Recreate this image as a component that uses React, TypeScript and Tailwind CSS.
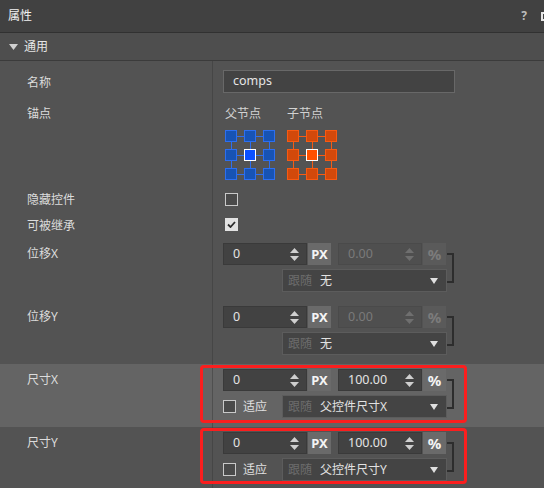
import React from "react";

const Spinner = ({ disabled }: { disabled?: boolean }) => (
  <svg width="9" height="13" viewBox="0 0 9 13">
    <path d="M0 5 L4.5 0 L9 5 Z" fill={disabled ? "#6f6f6f" : "#cfcfcf"} />
    <path d="M0 8 L9 8 L4.5 13 Z" fill={disabled ? "#6f6f6f" : "#cfcfcf"} />
  </svg>
);

const NumberField = ({ value, disabled }: { value: string; disabled?: boolean }) => (
  <div
    className={
      disabled
        ? "w-[84px] h-[22px] flex items-center justify-between pl-[9px] pr-[7px] border border-[#4a4a4a] bg-[#4f4f4f] text-[#7a7a7a]"
        : "w-[84px] h-[22px] flex items-center justify-between pl-[9px] pr-[7px] border border-[#3a3a3a] bg-[#424242] text-[#e4e4e4]"
    }
  >
    <span className="leading-none text-[12.5px]">{value}</span>
    <Spinner disabled={disabled} />
  </div>
);

const UnitBox = ({ label, disabled, big }: { label: string; disabled?: boolean; big?: boolean }) => (
  <div
    className={
      disabled
        ? "w-[23px] h-[22px] flex items-center justify-center bg-[#5a5a5a] text-[#7c7c7c] font-bold"
        : "w-[23px] h-[22px] flex items-center justify-center bg-[#6a6a6a] text-[#f4f4f4] font-bold"
    }
  >
    <span className={big ? "text-[15px] leading-none" : "text-[13px] leading-none"}>{label}</span>
  </div>
);

const Checkbox = ({ checked }: { checked?: boolean }) =>
  checked ? (
    <div className="w-[13px] h-[13px] bg-[#e2e2e2] flex items-center justify-center">
      <svg width="9" height="7" viewBox="0 0 9 7">
        <path d="M1 3.5 L3.5 6 L8 1" stroke="#2d2d2d" strokeWidth="1.8" fill="none" />
      </svg>
    </div>
  ) : (
    <div className="w-[13px] h-[13px] border border-[#c9c9c9] bg-[#4a4a4a]" />
  );

const Dropdown = ({ value, fit }: { value: string; fit?: boolean }) => (
  <div className="flex items-center h-[23px]">
    {fit ? (
      <div className="w-[59px] flex items-center">
        <Checkbox />
        <span className="ml-[7px] text-[#e0e0e0]">适应</span>
      </div>
    ) : (
      <div className="w-[59px]" />
    )}
    <div className="w-[165px] h-[23px] flex items-center pl-[5px] pr-[8px] bg-[#444444] border border-[#5c5c5c]">
      <span className="text-[#6c6c6c]">跟随</span>
      <span className="ml-[8px] text-[#e2e2e2]">{value}</span>
      <svg className="ml-auto" width="8" height="6" viewBox="0 0 8 6">
        <path d="M0 0 L8 0 L4 6 Z" fill="#e0e0e0" />
      </svg>
    </div>
  </div>
);

const TransformGroup = ({
  v1,
  v2,
  v2Disabled,
  dd,
  fit,
}: {
  v1: string;
  v2: string;
  v2Disabled?: boolean;
  dd: string;
  fit?: boolean;
}) => (
  <div className="flex pt-[5px]">
    <div className="flex flex-col gap-[4px]">
      <div className="flex">
        <NumberField value={v1} />
        <div className="ml-[1px]">
          <UnitBox label="PX" />
        </div>
        <div className="ml-[7px]">
          <NumberField value={v2} disabled={v2Disabled} />
        </div>
        <div className="ml-[1px]">
          <UnitBox label="%" disabled={v2Disabled} big />
        </div>
      </div>
      <Dropdown value={dd} fit={fit} />
    </div>
    <div className="w-[7px] h-[30px] mt-[10px] border-y-2 border-r-2 border-[#2d2d2d]" />
  </div>
);

const AnchorGrid = ({ fill, stroke, center }: { fill: string; stroke: string; center: string }) => {
  const pos = [0, 19, 38];
  return (
    <svg width="50" height="50" viewBox="0 0 50 50">
      {pos.map((p) => (
        <g key={"l" + p}>
          <line x1="12" y1={p + 6.5} x2="19" y2={p + 6.5} stroke={stroke} strokeWidth="1" />
          <line x1="31" y1={p + 6.5} x2="38" y2={p + 6.5} stroke={stroke} strokeWidth="1" />
          <line x1={p + 6.5} y1="12" x2={p + 6.5} y2="19" stroke={stroke} strokeWidth="1" />
          <line x1={p + 6.5} y1="31" x2={p + 6.5} y2="38" stroke={stroke} strokeWidth="1" />
        </g>
      ))}
      {pos.map((y, r) =>
        pos.map((x, c) => {
          const isCenter = r === 1 && c === 1;
          return (
            <rect
              key={`${r}-${c}`}
              x={x + 0.5}
              y={y + 0.5}
              width="11"
              height="11"
              fill={isCenter ? center : fill}
              stroke={isCenter ? "#ffffff" : stroke}
              strokeWidth="1"
            />
          );
        })
      )}
    </svg>
  );
};

const Label = ({ children, className }: { children: React.ReactNode; className: string }) => (
  <div className={className}>{children}</div>
);

export default function App() {
  return (
    <div className="w-[544px] h-[488px] overflow-hidden bg-[#535353] text-[12px] text-[#dcdcdc] font-['Noto_Sans','Noto_Sans_CJK_SC',sans-serif]">
      {/* Header */}
      <div className="w-[551px] h-[33px] flex items-center pl-[8px] bg-[#414141] border-b border-[#313131]">
        <span className="text-[#f2f2f2] text-[12px]">属性</span>
        <span className="ml-auto text-[#bcbcbc] font-bold text-[12px]">?</span>
        <div className="ml-[14px] w-[10px] h-[9px] border-2 border-[#e6e6e6] shrink-0" />
      </div>
      {/* Section */}
      <div className="h-[28px] flex items-center pl-[9px] bg-[#4e4e4e] border-b border-[#3b3b3b]">
        <svg width="9" height="6" viewBox="0 0 9 6">
          <path d="M0 0 L9 0 L4.5 6 Z" fill="#d0d0d0" />
        </svg>
        <span className="ml-[6px] text-[#e6e6e6]">通用</span>
      </div>

      {/* 名称 */}
      <div className="flex h-[41px]">
        <Label className="w-[213px] shrink-0 border-r border-[#464646] pl-[27px] pt-[10px] leading-[23px]">名称</Label>
        <div className="pl-[10px] pt-[9px]">
          <div className="w-[232px] h-[23px] flex items-center pl-[9px] bg-[#434343] border border-[#686868] text-[#e6e6e6] text-[12.5px]">
            comps
          </div>
        </div>
      </div>

      {/* 锚点 */}
      <div className="flex h-[84px]">
        <Label className="w-[213px] shrink-0 border-r border-[#464646] pl-[27px] pt-[3px] leading-[18px]">锚点</Label>
        <div className="pl-[12px] pt-[3px] flex gap-[12px]">
          <div className="flex flex-col">
            <span className="leading-[18px] text-[#d2d2d2]">父节点</span>
            <div className="mt-[7px]">
              <AnchorGrid fill="#1753b4" stroke="#2d6ff0" center="#0a50ff" />
            </div>
          </div>
          <div className="flex flex-col">
            <span className="leading-[18px] text-[#d2d2d2]">子节点</span>
            <div className="mt-[7px]">
              <AnchorGrid fill="#d2490b" stroke="#f85a12" center="#ff5000" />
            </div>
          </div>
        </div>
      </div>

      {/* 隐藏控件 */}
      <div className="flex h-[26px]">
        <Label className="w-[213px] shrink-0 border-r border-[#464646] pl-[27px] pt-[1px] leading-[26px]">隐藏控件</Label>
        <div className="pl-[12px] pt-[7px]">
          <Checkbox />
        </div>
      </div>

      {/* 可被继承 */}
      <div className="flex h-[26px]">
        <Label className="w-[213px] shrink-0 border-r border-[#464646] pl-[27px] pt-[1px] leading-[26px]">可被继承</Label>
        <div className="pl-[12px] pt-[6px]">
          <Checkbox checked />
        </div>
      </div>

      {/* 位移X */}
      <div className="flex h-[63px]">
        <Label className="w-[213px] shrink-0 border-r border-[#464646] pl-[27px] pt-[5px] leading-[22px]">位移X</Label>
        <div className="pl-[10px]">
          <TransformGroup v1="0" v2="0.00" v2Disabled dd="无" />
        </div>
      </div>

      {/* 位移Y */}
      <div className="flex h-[63px]">
        <Label className="w-[213px] shrink-0 border-r border-[#464646] pl-[27px] pt-[5px] leading-[22px]">位移Y</Label>
        <div className="pl-[10px]">
          <TransformGroup v1="0" v2="0.00" v2Disabled dd="无" />
        </div>
      </div>

      {/* 尺寸X */}
      <div className="relative flex h-[63px] bg-[#646464]">
        <Label className="w-[213px] shrink-0 border-r border-[#4f4f4f] pl-[27px] pt-[5px] leading-[22px]">尺寸X</Label>
        <div className="pl-[10px]">
          <TransformGroup v1="0" v2="100.00" dd="父控件尺寸X" fit />
        </div>
        <div className="absolute left-[200px] top-[1px] w-[267px] h-[58px] border-[3px] border-[#fb1e1e] rounded-[4px]" />
      </div>

      {/* 尺寸Y */}
      <div className="relative flex h-[63px]">
        <Label className="w-[213px] shrink-0 border-r border-[#464646] pl-[27px] pt-[5px] leading-[22px]">尺寸Y</Label>
        <div className="pl-[10px]">
          <TransformGroup v1="0" v2="100.00" dd="父控件尺寸Y" fit />
        </div>
        <div className="absolute left-[200px] top-[1px] w-[267px] h-[56px] border-[3px] border-[#fb1e1e] rounded-[4px]" />
      </div>
    </div>
  );
}
